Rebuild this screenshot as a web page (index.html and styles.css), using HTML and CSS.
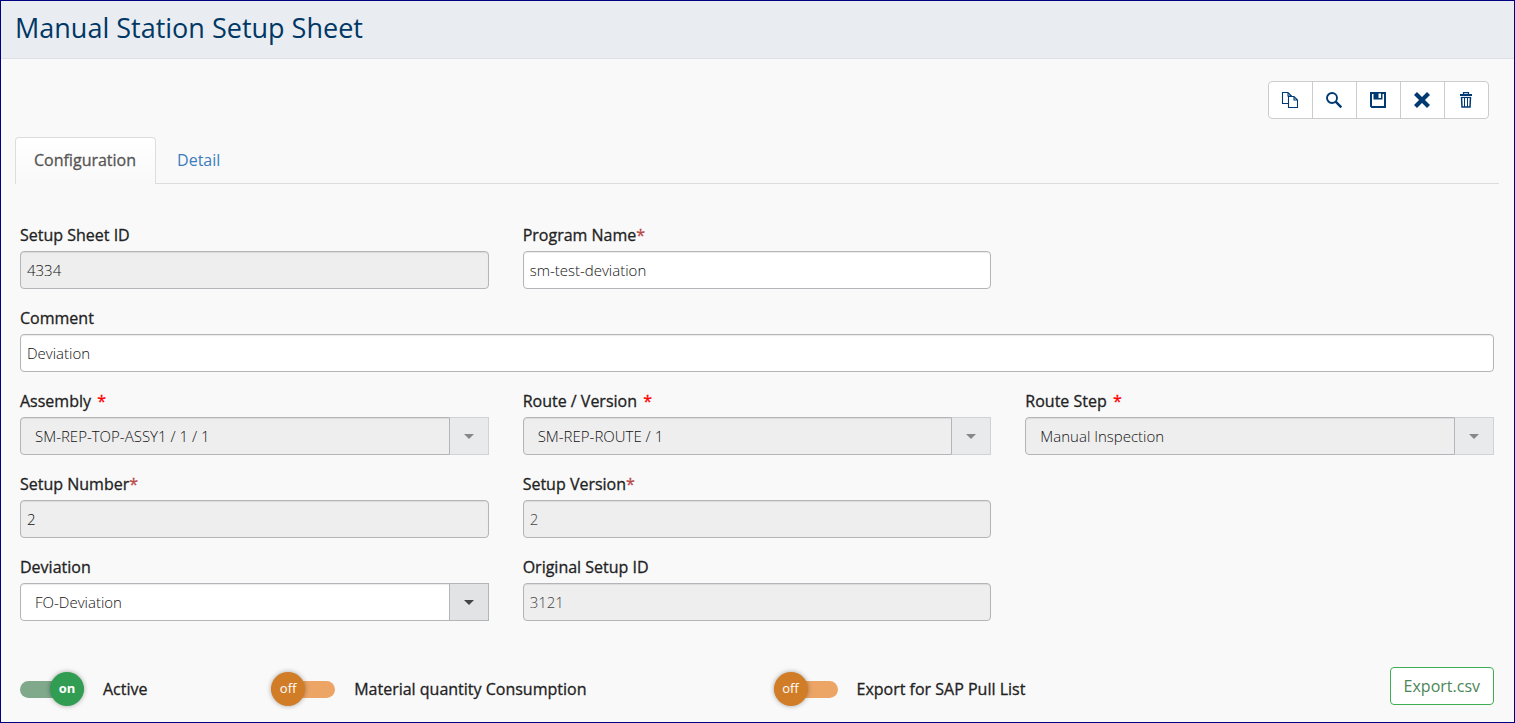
FILE: index.html
```html
<!DOCTYPE html>
<html lang="en">
<head>
<meta charset="utf-8">
<title>Manual Station Setup Sheet</title>
<link rel="stylesheet" href="styles.css">
</head>
<body>
<header class="page-header"><h1>Manual Station Setup Sheet</h1></header>
<main class="page-main">
  <div class="toolbar">
    <button type="button" aria-label="Copy"><svg width="18" height="18" viewBox="0 0 18 18" fill="none" stroke="currentColor" stroke-width="1.1"><path d="M7.5 12.5H1.5V1.5H7L10.5 5V6M7 1.5V5H10.5"/><path d="M7.5 5.5H13L16.5 9V16.5H7.5ZM13 5.5V9H16.5"/></svg></button>
    <button type="button" aria-label="Search"><svg width="18" height="18" viewBox="0 0 18 18" fill="none" stroke="currentColor"><circle cx="7" cy="7" r="5" stroke-width="1.9"/><path d="M10.7 10.7L16.3 16.3" stroke-width="2.4"/></svg></button>
    <button type="button" aria-label="Save"><svg width="18" height="18" viewBox="0 0 18 18" fill="currentColor"><path fill-rule="evenodd" d="M1 1H17V17H2.5L1 15.5ZM3 3V15H15V3H13.5V8.5H4.5V3ZM9.5 2.5V7H12V2.5Z"/></svg></button>
    <button type="button" aria-label="Close"><svg width="18" height="18" viewBox="0 0 18 18" fill="none" stroke="currentColor" stroke-width="4.2"><path d="M2.5 2.5L15.5 15.5M15.5 2.5L2.5 15.5"/></svg></button>
    <button type="button" aria-label="Delete"><svg width="18" height="18" viewBox="0 0 18 18" fill="none" stroke="currentColor"><path d="M6.5 3V1.6H11.5V3" stroke-width="1.2"/><path d="M3 4H15" stroke-width="2"/><path d="M4 6.5H14" stroke-width="1.2"/><path d="M4.5 6L5 16H13L13.5 6" stroke-width="1.5"/><path d="M7.5 6V16M10.5 6V16" stroke-width="1"/></svg></button>
  </div>
  <nav class="tabs">
    <a class="tab tab-active" href="#configuration">Configuration</a>
    <a class="tab" href="#detail">Detail</a>
  </nav>
  <form class="setup-form" id="configuration">
    <div class="fields">
      <div class="field"><label for="sheet-id">Setup Sheet ID</label><input id="sheet-id" type="text" value="4334" readonly></div>
      <div class="field"><label for="program">Program Name<span class="required">*</span></label><input id="program" type="text" value="sm-test-deviation"></div>
      <div class="field field-wide"><label for="comment">Comment</label><input id="comment" type="text" value="Deviation"></div>
      <div class="field"><label for="assembly">Assembly <span class="required required-bright">*</span></label><div class="combo"><select id="assembly" disabled><option>SM-REP-TOP-ASSY1 / 1 / 1</option></select><span class="combo-arrow"></span></div></div>
      <div class="field"><label for="route">Route / Version <span class="required required-bright">*</span></label><div class="combo"><select id="route" disabled><option>SM-REP-ROUTE / 1</option></select><span class="combo-arrow"></span></div></div>
      <div class="field"><label for="step">Route Step <span class="required required-bright">*</span></label><div class="combo"><select id="step" disabled><option>Manual Inspection</option></select><span class="combo-arrow"></span></div></div>
      <div class="field field-first"><label for="number">Setup Number<span class="required">*</span></label><input id="number" type="text" value="2" readonly></div>
      <div class="field"><label for="version">Setup Version<span class="required">*</span></label><input id="version" type="text" value="2" disabled></div>
      <div class="field field-first"><label for="deviation">Deviation</label><div class="combo"><select id="deviation"><option>FO-Deviation</option></select><span class="combo-arrow"></span></div></div>
      <div class="field"><label for="original">Original Setup ID</label><input id="original" type="text" value="3121" disabled></div>
    </div>
    <div class="actions">
      <label class="switch"><span class="switch-control"><input type="checkbox" checked><span class="knob knob-on" aria-hidden="true">on</span></span><span class="switch-text">Active</span></label>
      <label class="switch switch-wide"><span class="switch-control"><input type="checkbox"><span class="knob" aria-hidden="true">off</span></span><span class="switch-text">Material quantity Consumption</span></label>
      <label class="switch switch-wide"><span class="switch-control"><input type="checkbox"><span class="knob" aria-hidden="true">off</span></span><span class="switch-text">Export for SAP Pull List</span></label>
      <button class="export" type="button">Export.csv</button>
    </div>
  </form>
</main>
</body>
</html>
```
FILE: styles.css
```css
* { box-sizing: border-box; }

body {
  margin: 0;
  min-height: 100vh;
  border: 1px solid #000080;
  background: #f9f9f9;
  color: #222;
  font: 16px/20px "Open Sans", sans-serif;
}

.page-header {
  padding: 7px 14px 10px;
  background: #e9ecf1;
  border-bottom: 1px solid #dcdfe6;
}

.page-header h1 {
  margin: 0;
  color: #003764;
  font-size: 27px;
  line-height: 40px;
  font-weight: 400;
}

.page-main { padding: 22px 15px 0 14px; }

.toolbar {
  display: flex;
  width: fit-content;
  margin: 0 10px 18px auto;
  border: 1px solid #ccc;
  border-radius: 4px;
  background: #fff;
}

.toolbar button {
  display: grid;
  place-items: center;
  box-sizing: content-box;
  width: 42px;
  height: 36px;
  padding: 0 1px 0 0;
  border: 0;
  background: none;
  color: #003a70;
}

.toolbar button + button { border-left: 1px solid #ccc; }

.tabs {
  display: flex;
  border-bottom: 1px solid #ddd;
}

.tab {
  padding: 12px 20px 13px;
  border: 1px solid transparent;
  border-bottom: 0;
  color: #3c7cbd;
  text-decoration: none;
}

.tab-active {
  padding: 12px 19px 14px 18px;
  margin-bottom: -1px;
  border-color: #ddd;
  border-radius: 4px 4px 0 0;
  background: linear-gradient(#fff, #f9f9f9);
  color: #555;
}

.tab-active,
.field > label,
.switch-text { -webkit-text-stroke: 0.3px; }

.setup-form { padding: 41px 5px 10px; }

.fields {
  display: grid;
  grid-template-columns: repeat(3, 1fr);
  gap: 19px 34px;
}

.field { min-width: 0; }
.field-wide { grid-column: 1 / -1; }
.field-first { grid-column: 1; }
.field:nth-child(2) { grid-column: 2 / 3; }

.field > label {
  display: block;
  margin-bottom: 6px;
}

.required { color: #b94a48; }
.required-bright { margin-left: 2px; color: #f00; }

.field input,
.combo select {
  display: block;
  width: 100%;
  height: 38px;
  margin: 0;
  padding: 0 6px;
  border: 1px solid #b3b5b8;
  border-radius: 4px;
  background: #fff;
  box-shadow: inset 0 1px 1px rgba(0, 0, 0, 0.08);
  color: #111;
  font: 300 15px/20px "Open Sans", sans-serif;
  opacity: 1;
}

.field input:read-only,
.field input:disabled,
.combo select:disabled { background: #eee; }

.field input:disabled { color: #444; }

.combo {
  display: grid;
  grid-template-columns: 1fr 40px;
}

.combo select {
  grid-area: 1 / 1 / 2 / 3;
  appearance: none;
  padding: 0 50px 0 14px;
  border-radius: 4px 0 0 4px;
}

.combo-arrow {
  grid-area: 1 / 2;
  display: grid;
  place-items: center;
  border: 1px solid #b3b5b8;
  background: #e2e3e5;
  pointer-events: none;
}

.combo-arrow::before {
  content: "";
  border: 5px solid transparent;
  border-top-color: #444;
  border-bottom: 0;
}

.combo select:disabled + .combo-arrow {
  border-color: #d0d2d4;
  border-left-color: #b3b5b8;
  background: #e9eaec;
}

.combo select:disabled + .combo-arrow::before { border-top-color: #888; }

.actions {
  display: grid;
  grid-template-columns: repeat(6, 1fr);
  column-gap: 33px;
  align-items: center;
  min-height: 44px;
  margin-top: 46px;
}

.switch {
  display: flex;
  align-items: center;
  gap: 19px;
}

.switch-wide { grid-column: span 2; }

.switch-control {
  display: grid;
  align-items: center;
  width: 64px;
}

.switch-control input {
  grid-area: 1 / 1;
  appearance: none;
  width: 64px;
  height: 17px;
  margin: 0;
  border-radius: 9px;
  background: #eda566;
}

.switch-control input:checked { background: #80a98c; }

.knob {
  grid-area: 1 / 1;
  z-index: 1;
  width: 34px;
  height: 34px;
  border-radius: 50%;
  background: #d17d27;
  box-shadow: 0 0 5px rgba(0, 0, 0, 0.35);
  color: #fff;
  font-size: 13px;
  line-height: 32px;
  text-align: center;
}

.knob-on {
  justify-self: end;
  background: #319d52;
  font-weight: 700;
}

.export {
  place-self: start end;
  height: 38px;
  padding: 0 13px;
  border: 1px solid #3fae52;
  border-radius: 4px;
  background: #fff;
  color: #4c8558;
  font: 400 16px/20px "Open Sans", sans-serif;
}
```
